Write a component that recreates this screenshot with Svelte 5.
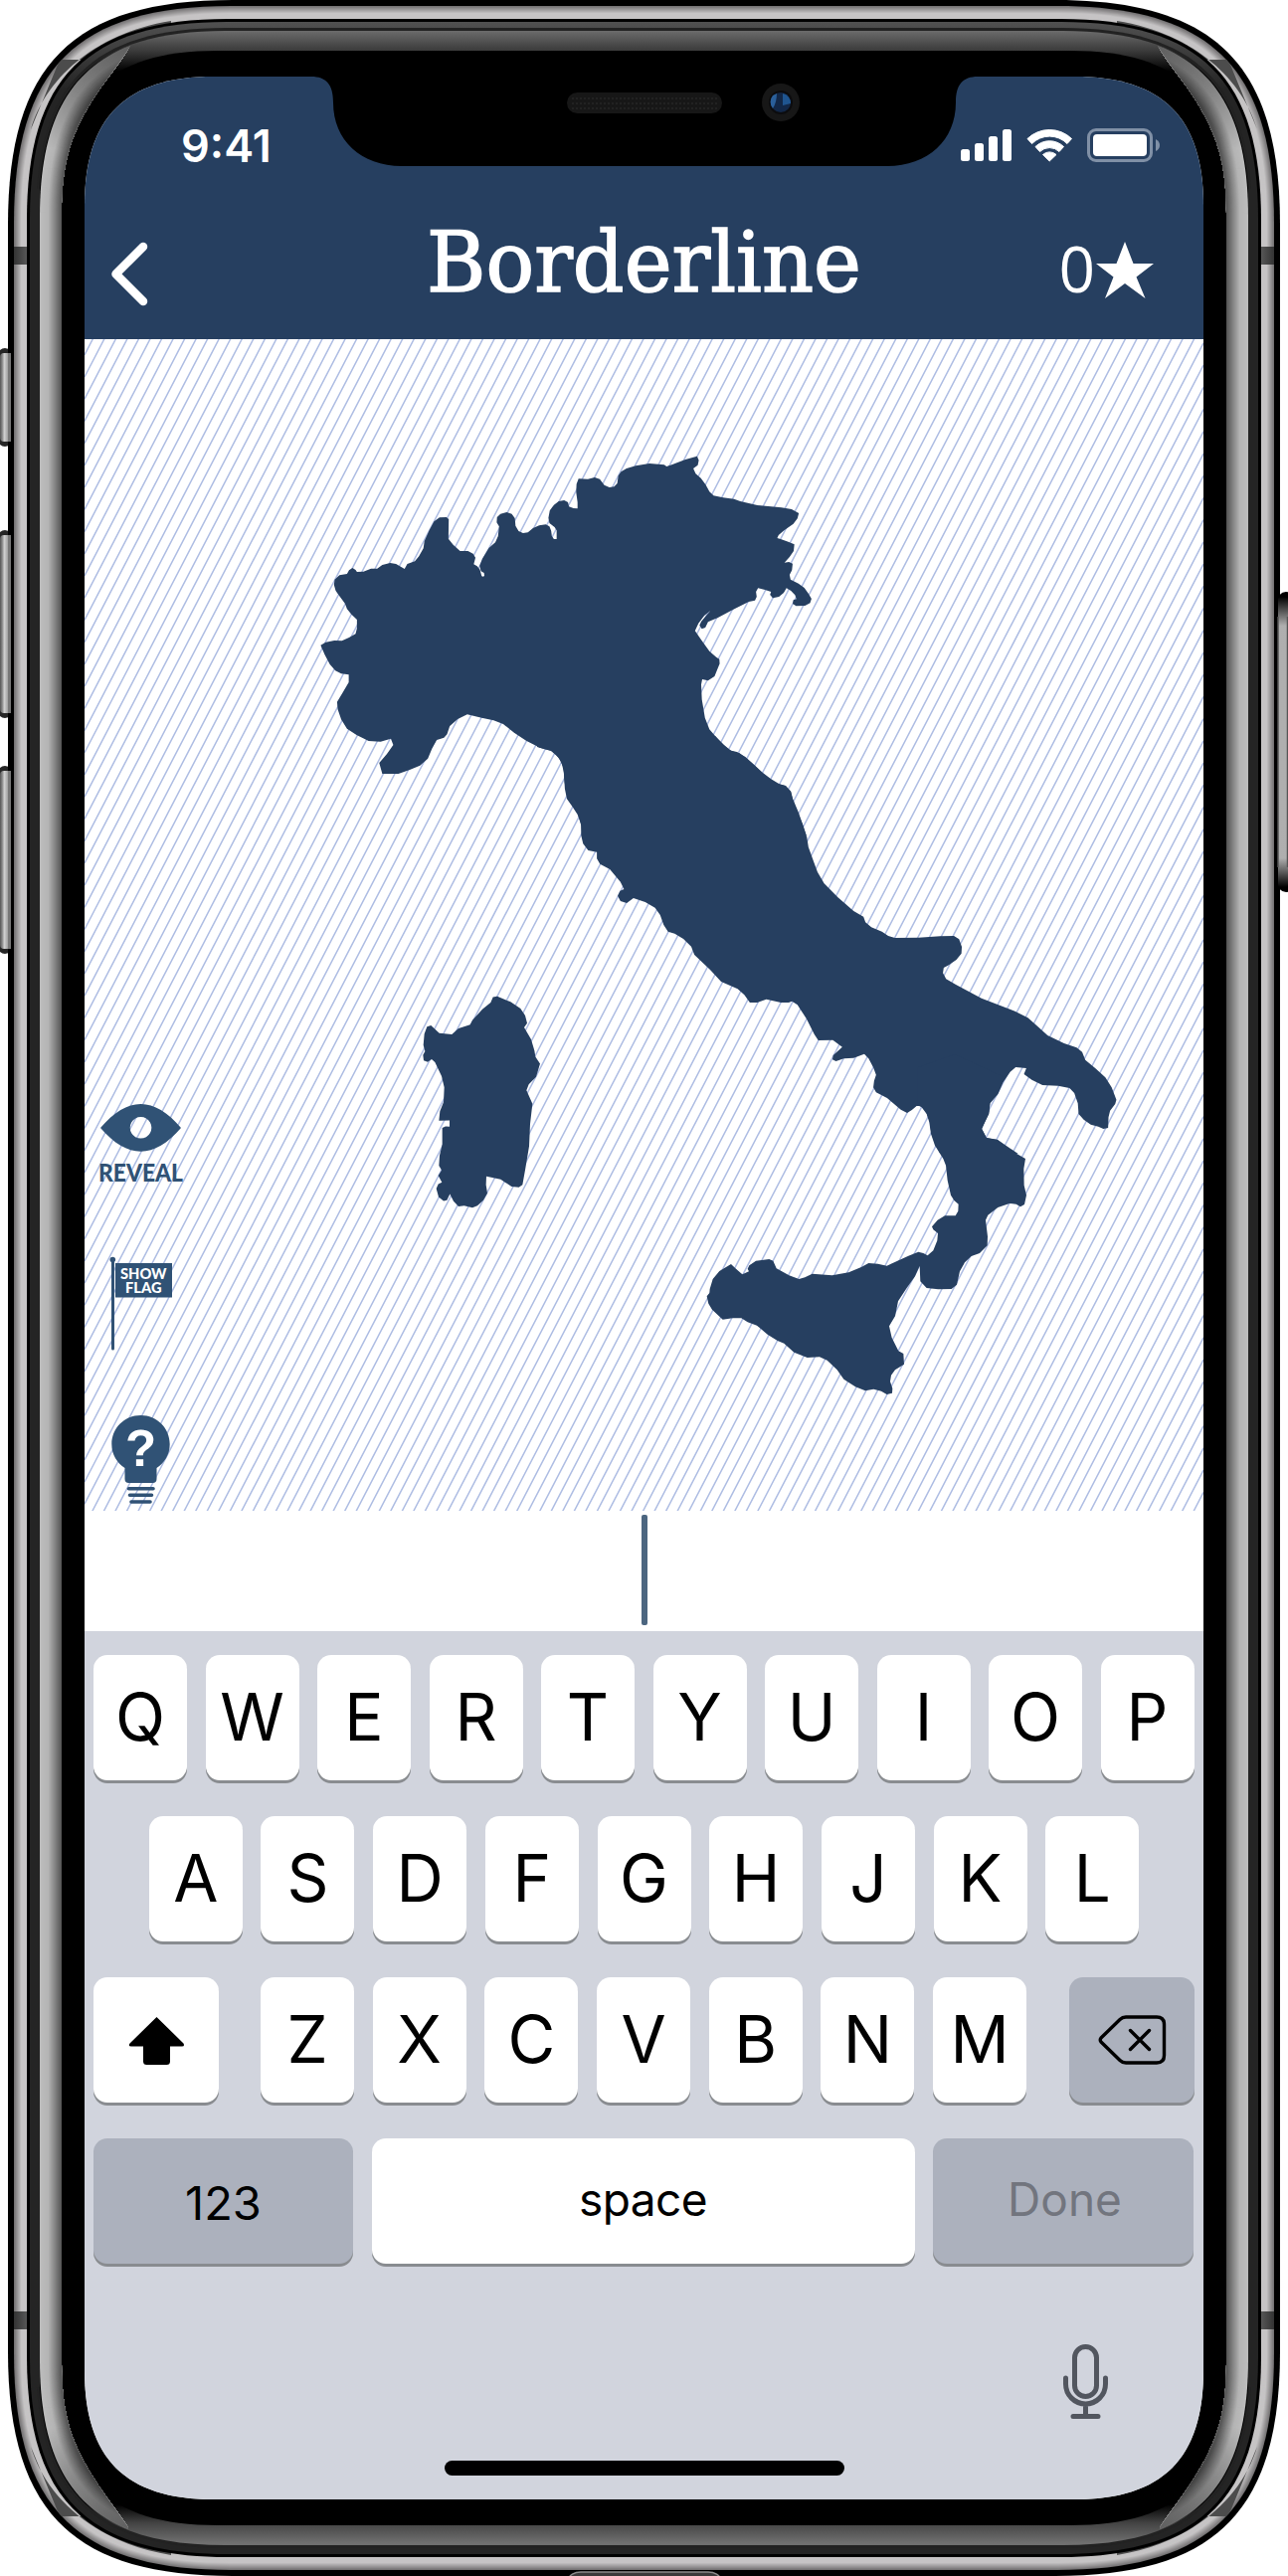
<script>
  const W = 1295;
  const H = 2590;

  // Continuous-corner outline of the handset, inset by d pixels.
  function outline(d, x0 = 8 + d, y0 = d) {
    const x1 = W - x0;
    const y1 = H - y0;
    const l = 226 - 1.25 * d;
    const c = 65 - 0.31 * d;
    return (
      `M${x0} ${y0 + l}C${x0} ${y0 + c} ${x0 + c} ${y0} ${x0 + l} ${y0}` +
      `H${x1 - l}C${x1 - c} ${y0} ${x1} ${y0 + c} ${x1} ${y0 + l}` +
      `V${y1 - l}C${x1} ${y1 - c} ${x1 - c} ${y1} ${x1 - l} ${y1}` +
      `H${x0 + l}C${x0 + c} ${y1} ${x0} ${y1 - c} ${x0} ${y1 - l}Z`
    );
  }

  const grey = (v) => `rgb(${v},${v - 2},${v - 1})`;
  const rim = Array.from({ length: 13 }, (_, i) => ({
    d: outline(6 + i),
    fill: grey(Math.round(118 + 80 * Math.min(1, i / 7)))
  }));
  const glare = Array.from({ length: 22 }, (_, i) => {
    const v = Math.round(i < 8 ? 188 - i : 180 - (i - 8) * 7.2);
    return { d: outline(32 + i), fill: `rgb(${v},${v},${v})` };
  });
  const corners = [
    '',
    `translate(${W} 0) scale(-1 1)`,
    `translate(0 ${H}) scale(1 -1)`,
    `translate(${W} ${H}) scale(-1 -1)`
  ];
  const sides = ['', `translate(${W} 0) scale(-1 1)`];
  const leftButtons = [
    { y: 350, h: 99 },
    { y: 533, h: 189 },
    { y: 770, h: 189 }
  ];

  // Diagonal hatching behind the map.
  let hatch = '';
  for (let k = 0; k < 152; k++) {
    const y = 356.8 + 22.22 * k;
    hatch += `M85 ${y.toFixed(2)}L1210 ${(y - 2167.2).toFixed(2)}`;
  }

  const topRow = [...'QWERTYUIOP'];
  const homeRow = [...'ASDFGHJKL'];
  const bottomRow = [...'ZXCVBNM'];
</script>

<main class="phone">
  <svg class="frame" viewBox="0 0 1295 2590" width="1295" height="2590" aria-hidden="true">
    <defs>
      <linearGradient id="bezel" gradientUnits="userSpaceOnUse" x1="0" y1="0" x2="0" y2="2590">
        <stop offset="0.01197" stop-color="#6b6b6b" />
        <stop offset="0.01969" stop-color="#3b3b3b" />
        <stop offset="0.0278" stop-color="#000" />
        <stop offset="0.9722" stop-color="#000" />
        <stop offset="0.97954" stop-color="#444" />
        <stop offset="0.98726" stop-color="#707070" />
      </linearGradient>
      <linearGradient id="lip" gradientUnits="userSpaceOnUse" x1="0" y1="22" x2="0" y2="90">
        <stop stop-color="#505050" /><stop offset="1" stop-color="#242424" />
      </linearGradient>
      <linearGradient id="shade" gradientUnits="userSpaceOnUse" x1="0" y1="45" x2="0" y2="150">
        <stop stop-color="#000" stop-opacity="0.5" /><stop offset="1" stop-color="#000" stop-opacity="0" />
      </linearGradient>
      <linearGradient id="band"><stop stop-color="#333" /><stop offset="1" stop-color="#5a5a5a" /></linearGradient>
      <linearGradient id="button">
        <stop stop-color="#555" /><stop offset="0.2" stop-color="#888" /><stop offset="0.4" stop-color="#d0d0d0" />
        <stop offset="0.65" stop-color="#aaa" /><stop offset="1" stop-color="#777" />
      </linearGradient>
      <linearGradient id="power" x1="0" y1="0" x2="0" y2="1">
        <stop stop-color="#000" /><stop offset="0.1" stop-color="#b8b8b8" />
        <stop offset="0.9" stop-color="#b8b8b8" /><stop offset="1" stop-color="#000" />
      </linearGradient>
      <clipPath id="rimClip"><path d={outline(6)} /></clipPath>
      <clipPath id="glareClip">
        <path d="M30 30H126L131 46C121 64 106 80 94 99C73 133 62 160 62 215V2375C62 2430 73 2457 94 2491C106 2510 119 2526 129 2541L124 2560H30Z" />
      </clipPath>
    </defs>

    {#each leftButtons as b}
      <rect x="-3" y={b.y} width="16" height={b.h} rx="9" fill="#262626" />
      <rect x="0" y={b.y + 5} width="11" height={b.h - 10} rx="4" fill="url(#button)" />
    {/each}

    <path d={outline(0)} fill="#000" />
    {#each rim as r}<path d={r.d} fill={r.fill} />{/each}
    <g clip-path="url(#rimClip)">
      {#each corners as t}
        <path transform={t} d="M31 130C45 82 92 34 172 21V60H60Z" fill="#4c4c4c" />
      {/each}
      {#each sides as t}
        <g transform={t}>
          <rect x="14" y="248" width="14" height="18" fill="url(#band)" />
          <rect x="14" y="2324" width="14" height="18" fill="url(#band)" />
        </g>
      {/each}
    </g>
    <path d={outline(19)} fill="#000" />
    <path d={outline(22)} fill="url(#lip)" />
    <path d={outline(28)} fill="#222" />
    <path d={outline(31)} fill="url(#bezel)" />
    <path d={outline(53, 59, 51)} fill="#000" />
    <rect x="40" y="190" width="1215" height="2210" fill="#000" />
    {#each sides as t}
      <g transform={t} clip-path="url(#glareClip)">
        {#each glare as g}<path d={g.d} fill={g.fill} />{/each}
        <path d={outline(32)} fill="url(#shade)" />
        <path d={outline(32)} fill="url(#shade)" transform={`translate(0 ${H}) scale(1 -1)`} />
      </g>
    {/each}
    <path d="M32 190H40V2400H32Z" fill="#242424" />
    <path d="M1255 190H1263V2400H1255Z" fill="#242424" />

    {#each leftButtons as b}
      <rect x="8" y={b.y + 5} width="3" height={b.h - 10} fill="#777" />
    {/each}
    <rect x="1284" y="595" width="18" height="302" rx="10" fill="#000" />
    <rect x="1285" y="600" width="10" height="292" rx="3" fill="url(#power)" opacity="0.95" />
    <path d="M1285 620V872M1294.500 620V872" stroke="#555" stroke-width="1.500" />
    <rect x="572" y="2586" width="152" height="14" rx="12" fill="#3a3a3a" stroke="#8a8a8a" stroke-width="1.500" />
  </svg>

  <div class="screen">
    <svg class="notch" viewBox="228 0 670 90" width="670" height="90" aria-hidden="true">
      <path d="M228 0C243 0 250 8 250 26C250 64 278 90 319 90H807C848 90 876 64 876 26C876 8 883 0 898 0Z" />
      <rect x="485" y="16" width="156" height="21" rx="10.500" fill="#171717" />
      <path d="M490 22H636M490 27H636M490 32H636" stroke="#222" stroke-width="2" stroke-dasharray="2 2" />
      <circle cx="700" cy="26" r="19" fill="#171717" />
      <circle cx="700" cy="26" r="12" fill="#0c0c0e" />
      <circle cx="700" cy="26" r="10" fill="#122747" />
      <path d="M692 19A10 10 0 0 0 692 32Q696 26 696 17Z" fill="#2a5f9a" />
      <path d="M702 17A10 10 0 0 1 710 27L702 29Z" fill="#1f5590" />
    </svg>

    <header>
      <div class="status">
        <span class="time">9:41</span>
        <svg viewBox="966 129 200 34" width="200" height="34" fill="#fff" aria-hidden="true">
          <rect x="966" y="150" width="9" height="12" rx="2.500" />
          <rect x="980" y="144" width="9" height="18" rx="2.500" />
          <rect x="994" y="137" width="9" height="25" rx="2.500" />
          <rect x="1008" y="130" width="9" height="32" rx="2.500" />
          <path d="M1033 139.500A32 32 0 0 1 1077.500 139.500L1073 144.500A25 25 0 0 0 1037.500 144.500Z" stroke="#fff" stroke-linejoin="round" />
          <path d="M1041 147.500A20.500 20.500 0 0 1 1069.500 147.500L1065 152.500A14 14 0 0 0 1045.500 152.500Z" stroke="#fff" stroke-linejoin="round" />
          <path d="M1048.500 155.500A10 10 0 0 1 1062 155.500L1055.200 162Z" stroke="#fff" stroke-linejoin="round" />
          <rect x="1094.500" y="130.500" width="63" height="31" rx="7.500" fill="none" stroke="#8090a6" stroke-width="3" />
          <rect x="1099" y="135" width="54" height="22" rx="4" />
          <path d="M1162 140Q1166 142 1166 146T1162 152Z" fill="#8090a6" />
        </svg>
      </div>
      <div class="nav">
        <svg class="back" viewBox="110 215 42 126" width="42" height="126" role="img" aria-label="Back">
          <path d="M144 248L116.500 275.500L144 303" />
        </svg>
        <svg viewBox="420 215 455 126" width="455" height="126">
          <text class="title" x="429" y="293" textLength="437" lengthAdjust="spacingAndGlyphs">Borderline</text>
        </svg>
        <svg class="score" viewBox="1062 215 98 126" width="98" height="126">
          <text class="points" x="1064.500" y="294">0</text>
          <path d="M1131 243L1139.500 265H1160L1142.500 278.500L1151.500 300L1131 285L1111 300L1119.500 278.500L1102 265H1122.500Z" />
        </svg>
      </div>
    </header>

    <svg class="map" viewBox="85 341 1125 1178" width="1125" height="1178">
      <path d={hatch} class="hatch" />
      <g class="land">
        <path
          transform="translate(300 440) scale(0.34439 0.33333)"
          d="M65 626L80 617L105 612L127 613L148 603L167 592L171 575L171 549L155 533L142 517L136 500L122 481L109 462L104 444L106 428L120 415L142 411L148 400L158 393L167 399L171 405L190 404L212 395L230 395L245 384L268 378L285 381L310 396L318 381L340 373L352 358L365 334L368 312L382 280L396 253L412 241L432 240L439 246L438 305L452 323L472 342L495 342L510 350L517 362L512 382L522 388L530 398L535 417Q538 421 543 417L542 408L533 403L529 387L537 365L556 333L575 316L583 297L586 268L579 256L580 240L590 230L608 225L623 230L632 243L634 266L643 282L656 288L670 286L685 273L703 265L722 262L733 268L738 281L740 297L746 306L754 306L754 280L748 270L733 258L730 242L734 220L746 203L760 192L776 189L787 195L790 208L803 213L815 214L815 195L811 165L812 140L818 124L845 125L865 120L880 125L893 143L908 150L922 148L931 138L934 115L942 103L958 93L985 85L1025 78L1068 82L1075 87L1090 82L1130 66L1164 56L1169 68L1166 83L1153 93L1160 109L1175 122L1189 142L1200 163L1212 175L1240 181L1272 185L1290 192L1340 204L1410 211L1440 216L1461 228L1457 244L1445 260L1418 280L1402 294L1398 303L1410 307L1430 314L1448 322L1446 342L1434 360L1419 377L1432 375L1443 380L1441 400L1434 414L1437 428L1460 440L1477 453L1489 470L1498 486L1494 499L1479 507L1453 508L1443 501L1445 490L1454 487L1450 475L1438 462L1425 454L1417 468L1403 480L1385 484L1377 474L1380 465L1362 459L1342 454L1336 465L1338 480L1333 491L1315 495L1270 518L1225 543L1196 556L1188 573L1178 577L1171 566L1176 555L1203 522L1185 537L1168 560L1158 583L1175 608L1200 644L1220 662L1229 668L1230 682L1222 702L1215 720L1196 733L1179 729L1176 745L1178 790L1187 845L1200 880L1225 910L1258 943L1280 948L1305 963L1355 1010L1380 1030L1404 1045L1423 1050L1438 1067L1443 1088L1460 1130L1483 1200L828 1200L825 1165L815 1137L800 1113L784 1090L778 1060L775 1010L768 978L752 956L737 944L705 935L665 914L630 890L598 864L570 853L535 845L493 835L465 849L442 870L434 895L425 905L404 912L390 938L378 968L355 989L325 1002L292 1014L245 1014L236 981L258 955L277 927L270 908L240 917L205 915L170 897L142 878L125 850L115 820L113 797L130 768L147 738L147 715L125 712L108 703L92 684L77 655Z"
        />
        <path
          transform="translate(540 740) scale(0.39541 0.33333)"
          d="M0 0L453 0L475 27L495 46L515 52L545 80L585 125L610 143L630 150L645 168L652 200L675 265L686 305L690 335L703 378L713 410L730 445L765 487L805 528L830 545L835 562L850 577L877 590L893 603L910 609L970 608L1025 604L1060 603L1073 613L1080 636L1079 656L1066 675L1047 691L1034 699L1032 715L1040 733L1065 750L1130 791L1215 830L1248 850L1275 878L1298 903L1340 927L1372 940L1386 953L1394 977L1420 1003L1445 1030L1461 1060L1473 1097L1470 1110L1457 1130L1453 1150L1452 1182L1440 1185L1427 1178L1408 1172L1390 1157L1377 1140L1375 1108L1366 1077L1354 1062L1325 1055L1285 1053L1258 1037L1238 1020L1244 1002L1217 999L1203 1013L1185 1045L1172 1080L1152 1108L1149 1135L1131 1185L1143 1212L1170 1217L1223 1260L1025 1260L1010 1223L1002 1195L998 1160L987 1127L975 1116L965 1116L953 1128L941 1137L925 1127L890 1092L862 1075L855 1060L857 1040L862 1022L855 1000L843 973L832 959L805 971L780 973L760 981L751 976L753 963L776 938L752 917L715 918L705 900L685 853L662 811L648 800L640 804L620 804L583 794L560 804L541 804L527 781L510 763L468 741L440 705L400 660L392 635L372 612L350 596L333 590L322 570L313 540L300 518L275 501L245 489L228 504L212 498L205 482L211 467L221 462L212 440L185 402L160 386L152 370L152 350L130 345L117 325L112 300L112 270L104 235L93 215L77 188L70 140L67 95L55 65L36 45L15 38L0 33Z"
        />
        <path
          transform="translate(660 1040) scale(0.33333)"
          d="M788 214L800 220L815 240L823 265L828 300L840 335L865 375L873 395L878 440L888 485L898 501L911 512L910 533L902 547L870 547L848 560L831 580L835 589L849 600L847 622L835 652L818 667L805 660L790 656L760 668L695 698L668 692L640 690L618 702L580 718L530 727L470 722L448 733L430 738L400 727L362 706L352 683L340 678L300 683L280 697L275 707L279 715L259 724L240 707L225 693L190 714L170 738L161 768L160 780L152 790L157 812L168 830L200 860L230 856L256 856L275 868L303 878L335 905L365 924L385 932L415 959L455 975L492 973L515 983L545 1012L565 1040L600 1063L630 1075L655 1070L678 1076L695 1086L711 1082L712 1068L705 1047L708 1028L720 1012L747 995L745 963L730 955L710 915L702 880L720 850L729 805L755 765L780 730L794 698L796 745L815 765L850 769L890 768L906 755L915 715L930 688L950 669L975 660L998 637L999 610L993 560L1000 545L1030 522L1065 510L1085 512L1098 520L1110 513L1116 485L1109 455L1108 405L1113 375L1075 353L1030 319L995 312L981 285L1003 240L1006 206L1030 175L1050 130L900 60L788 100Z"
        />
        <path
          transform="translate(80 960) scale(0.33333 0.36996)"
          d="M1240 130L1247 115L1260 113L1300 128L1330 146L1344 165L1350 186L1341 197L1362 230L1372 260L1375 277L1389 296L1377 332L1355 352L1348 368L1366 405L1359 460L1356 520L1345 580L1336 625L1325 632L1303 630L1270 610L1227 602L1226 625L1230 648L1218 667L1200 682L1185 687L1160 682L1143 684L1128 670L1117 650L1108 667L1098 669L1083 658L1076 635L1082 623L1093 618L1082 600L1092 585L1084 573L1086 545L1094 515L1094 470L1104 466L1116 467L1116 450L1084 451L1087 425L1098 400L1100 360L1092 330L1072 292L1062 284L1050 291L1038 287L1036 272L1042 262L1037 245L1040 215L1048 195L1060 192L1085 213L1123 216L1143 200L1178 190L1185 178L1215 148Z"
        />
      </g>
      <g class="tools">
        <path fill-rule="evenodd" d="M101 1134C128 1102 155 1102 182 1134C155 1165.500 128 1165.500 101 1134ZM141.500 1123A10.800 10.800 0 1 0 141.600 1123Z" />
        <text class="reveal" x="99" y="1188" textLength="85" lengthAdjust="spacingAndGlyphs">REVEAL</text>
        <circle cx="113.300" cy="1266.500" r="2.800" />
        <path d="M113.500 1267V1356" class="pole" />
        <rect x="116" y="1270" width="57" height="34.500" />
        <text class="flag" x="121" y="1285.800" textLength="46.500" lengthAdjust="spacingAndGlyphs">SHOW</text>
        <text class="flag" x="126" y="1300.300" textLength="36.500" lengthAdjust="spacingAndGlyphs">FLAG</text>
        <path d="M141.500 1423C158 1423 170.700 1436 170.700 1452C170.700 1463 165 1471 157.500 1476V1487Q157.500 1491 153.500 1491H129.500Q125.500 1491 125.500 1487V1476C118 1471 112.300 1463 112.300 1452C112.300 1436 125 1423 141.500 1423Z" />
        <path class="coil" d="M129.500 1496.700H154M130.500 1503.200H152.500M132 1510H151" />
        <text class="hint" x="141.700" y="1474">?</text>
      </g>
    </svg>

    <div class="answer"><span class="caret"></span></div>

    <section class="keyboard">
      <div class="row">
        {#each topRow as k}<button class="key">{k}</button>{/each}
      </div>
      <div class="row home">
        {#each homeRow as k}<button class="key">{k}</button>{/each}
      </div>
      <div class="row lower">
        <button class="key wide shift" aria-label="Shift">
          <svg viewBox="129 2026 57 51" width="57" height="51">
            <path d="M157.500 2028L184.500 2054.500Q186 2057.500 183 2057.500H171V2072.500Q171 2076 167.500 2076H147.500Q144 2076 144 2072.500V2057.500H132Q128.500 2057.500 130.500 2054.500Z" />
          </svg>
        </button>
        {#each bottomRow as k}<button class="key">{k}</button>{/each}
        <button class="key wide dark erase" aria-label="Delete">
          <svg class="outlined" viewBox="1103 2025 70 52" width="70" height="52">
            <path d="M1107 2049L1126 2030.500Q1128.500 2028 1132 2028H1163Q1170.500 2028 1170.500 2035.500V2066.500Q1170.500 2074 1163 2074H1132Q1128.500 2074 1126 2071.500L1107 2053Q1105.500 2051 1107 2049ZM1136.500 2041.500L1155.500 2060.500M1155.500 2041.500L1136.500 2060.500" />
          </svg>
        </button>
      </div>
      <div class="row">
        <button class="key word dark numbers">123</button>
        <button class="key word space">space</button>
        <button class="key word dark done">Done</button>
      </div>
      <div class="dictation">
        <svg viewBox="1069 2356 45 77" width="45" height="77" role="img" aria-label="Dictate">
          <rect x="1080.500" y="2359.500" width="22" height="50" rx="11" />
          <path d="M1071.500 2391V2397A20 20 0 0 0 1111.500 2397V2391M1091.500 2418V2428M1079 2429.500H1104" />
        </svg>
      </div>
      <div class="homebar"></div>
    </section>
  </div>
</main>

<style>
  :global(body) {
    margin: 0;
    background: #fff;
  }
  .phone {
    display: grid;
    width: 1295px;
    height: 2590px;
    overflow: hidden;
    font-family: Inter, 'Liberation Sans', sans-serif;
  }
  svg {
    display: block;
  }
  .frame,
  .screen {
    grid-area: 1 / 1;
  }
  .screen {
    position: relative;
    display: flex;
    flex-direction: column;
    width: 1125px;
    height: 2436px;
    margin: 77px 85px;
    background: #fff;
    clip-path: path('M0 130C0 41 41 0 130 0H995C1084 0 1125 41 1125 130V2306C1125 2395 1084 2436 995 2436H130C41 2436 0 2395 0 2306Z');
  }
  .notch {
    position: absolute;
    top: 0;
    left: 228px;
  }
  header {
    height: 264px;
    background: #263f60;
    color: #fff;
  }
  .status {
    display: flex;
    align-items: center;
    justify-content: space-between;
    box-sizing: border-box;
    height: 138px;
    padding: 0 44px 0 97px;
  }
  .time {
    font-size: 45px;
    font-weight: 600;
    line-height: 1;
  }
  .nav {
    display: grid;
    grid-template-columns: 310px 455px 285px;
    height: 126px;
    padding: 0 50px 0 25px;
  }
  .back path {
    fill: none;
    stroke: #fff;
    stroke-width: 8.5;
    stroke-linecap: round;
    stroke-linejoin: round;
  }
  .title {
    fill: #fff;
    stroke: #fff;
    stroke-width: 1.6;
    font-family: 'DejaVu Serif', serif;
    font-size: 85px;
  }
  .score {
    justify-self: end;
    fill: #fff;
  }
  .points {
    font-family: 'Open Sans', sans-serif;
    font-size: 64px;
  }
  .map {
    flex: none;
    overflow: hidden;
  }
  .hatch {
    fill: none;
    stroke: #aebde3;
    stroke-width: 1.5;
  }
  .land {
    fill: #263f60;
  }
  .tools {
    fill: #305275;
  }
  .reveal {
    font-family: Lato, sans-serif;
    font-size: 24.5px;
    font-weight: 900;
  }
  .flag {
    fill: #fff;
    font-family: Lato, sans-serif;
    font-size: 14.4px;
    font-weight: 900;
  }
  .pole {
    stroke: #305275;
    stroke-width: 3;
    stroke-linecap: round;
  }
  .coil {
    stroke: #305275;
    stroke-width: 3.6;
    stroke-linecap: round;
  }
  .hint {
    fill: #fff;
    font-family: 'Liberation Sans', sans-serif;
    font-size: 51px;
    font-weight: 700;
    text-anchor: middle;
  }
  .answer {
    display: flex;
    align-items: center;
    justify-content: center;
    height: 121px;
  }
  .caret {
    width: 6px;
    height: 111px;
    margin: -2px 0 0 1px;
    border-radius: 2px;
    background: #4c6680;
  }
  .keyboard {
    display: flex;
    flex: 1;
    flex-direction: column;
    gap: 36px;
    padding: 24px 9px 0;
    background: #d1d4dd;
  }
  .row {
    display: flex;
    gap: 18.5px;
    height: 126px;
  }
  .home {
    gap: 18.7px;
    justify-content: center;
  }
  .lower {
    gap: 18.7px;
  }
  .key {
    display: flex;
    flex: none;
    align-items: center;
    justify-content: center;
    width: 94px;
    height: 126px;
    padding: 0;
    border: 0;
    border-radius: 14px;
    background: #fff;
    box-shadow: 0 3px 0 #898c90;
    color: #000;
    font: 400 65.5px/1 Inter, 'Liberation Sans', sans-serif;
  }
  .wide {
    width: 126px;
  }
  .shift {
    margin-right: 23.3px;
  }
  .erase {
    margin-left: auto;
  }
  .dark {
    background: #acb1bd;
  }
  .outlined {
    fill: none;
    stroke: #000;
    stroke-width: 3.4;
    stroke-linecap: round;
    stroke-linejoin: round;
  }
  .word {
    padding-bottom: 4px;
    font-size: 46px;
  }
  .numbers {
    width: 261px;
    padding: 2px 0 0;
    font-size: 47px;
  }
  .space {
    width: 546px;
    letter-spacing: -0.6px;
  }
  .done {
    width: 262px;
    padding-left: 3px;
    color: #72757e;
  }
  .dictation {
    display: flex;
    justify-content: flex-end;
    padding: 44px 87px 0 0;
  }
  .dictation svg {
    fill: none;
    stroke: #52565f;
    stroke-width: 5;
    stroke-linecap: round;
  }
  .homebar {
    width: 402px;
    height: 14.5px;
    margin: 5px auto 0;
    border-radius: 8px;
    background: #000;
  }
</style>
